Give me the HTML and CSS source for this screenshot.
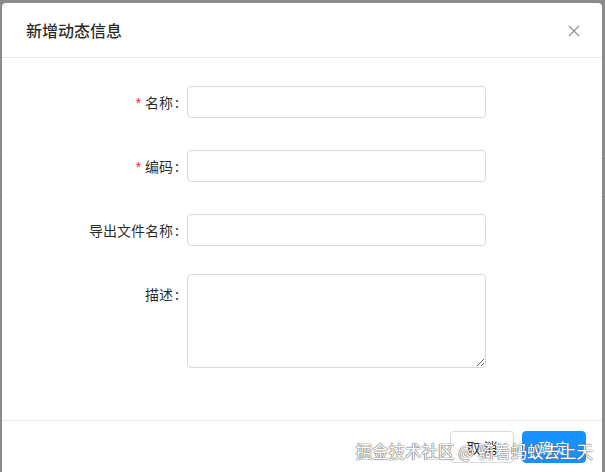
FILE: index.html
```html
<!DOCTYPE html>
<html lang="zh-CN">

<head>
    <meta charset="UTF-8">
    <title>新增动态信息</title>
    <link rel="stylesheet" href="styles.css">
</head>

<body>
    <div class="modal">
        <div class="modal-header">
            <div class="modal-title">新增动态信息</div>
            <button class="modal-close" type="button" aria-label="Close">
                <svg viewBox="0 0 12 12" width="12" height="12">
                    <path d="M1 1 L11 11 M11 1 L1 11" stroke="currentColor" stroke-width="1.1" fill="none"/>
                </svg>
            </button>
        </div>

        <div class="modal-body">
            <form class="form" action="#">
                <div class="form-item">
                    <label class="form-label required">名称</label>
                    <div class="form-control"><input type="text" class="input"></div>
                </div>
                <div class="form-item">
                    <label class="form-label required">编码</label>
                    <div class="form-control"><input type="text" class="input"></div>
                </div>
                <div class="form-item">
                    <label class="form-label">导出文件名称</label>
                    <div class="form-control"><input type="text" class="input"></div>
                </div>
                <div class="form-item">
                    <label class="form-label">描述</label>
                    <div class="form-control"><textarea class="input textarea"></textarea></div>
                </div>
            </form>
        </div>

        <div class="modal-footer">
            <button type="button" class="btn">取 消</button>
            <button type="button" class="btn btn-primary">确 定</button>
        </div>
    </div>

    <div class="watermark">掘金技术社区 @ 骑着蚂蚁去上天</div>
</body>

</html>
```

FILE: styles.css
```css
:root {
    --primary-color: #1890ff;
    --text-color: rgba(0, 0, 0, 0.85);
    --light-text: rgba(0, 0, 0, 0.45);
    --border-color: #d9d9d9;
    --split-color: #e8e8e8;
    --required-color: #f5222d;
}

* {
    margin: 0;
    padding: 0;
    box-sizing: border-box;
}

body {
    height: 472px;
    overflow: hidden;
    padding: 3px 3px 0 2px;
    font-family: "Noto Sans CJK SC", "Noto Sans", sans-serif;
    font-size: 14px;
    color: var(--text-color);
    background: #8c8c8c;
    background-image:
        linear-gradient(#7b7b7b, #7b7b7b),
        linear-gradient(#7b7b7b, #7b7b7b);
    background-size: 100% 1px, 100% 1px;
    background-position: 0 158px, 0 196px;
    background-repeat: no-repeat;
    position: relative;
}

.modal {
    position: relative;
    width: 600px;
    background: #fff;
    border-radius: 4px 4px 0 0;
}

.modal-header {
    height: 55px;
    padding: 16px 24px;
    border-bottom: 1px solid var(--split-color);
}

.modal-title {
    font-size: 16px;
    font-weight: 500;
    line-height: 22px;
    color: var(--text-color);
}

.modal-close {
    position: absolute;
    top: 0;
    right: 0;
    width: 56px;
    height: 56px;
    border: none;
    background: transparent;
    color: var(--light-text);
    display: flex;
    align-items: center;
    justify-content: center;
    cursor: pointer;
}

.modal-body {
    padding: 24px;
}

.form-item {
    display: flex;
    margin-bottom: 24px;
}

.form-item:last-child {
    margin-bottom: 28px;
}

.form-label {
    width: 161px;
    height: 40px;
    flex: none;
    line-height: 40px;
    text-align: right;
    white-space: nowrap;
    color: var(--text-color);
}

.form-label.required::before {
    content: "*";
    margin-right: 4px;
    font-family: "Liberation Sans", sans-serif;
    font-size: 14px;
    line-height: 1;
    color: var(--required-color);
}

.form-label::after {
    content: ":";
    margin: 0 8px 0 2px;
}

.form-control {
    width: 299px;
    height: 40px;
    display: flex;
    align-items: center;
}

.form-control:has(.textarea) {
    height: auto;
    align-items: flex-start;
}

.input {
    width: 100%;
    height: 32px;
    padding: 4px 11px;
    font-family: inherit;
    font-size: 14px;
    color: var(--text-color);
    border: 1px solid var(--border-color);
    border-radius: 4px;
    background: #fff;
    outline: none;
}

.textarea {
    height: 94px;
    line-height: 1.5;
}

.modal-footer {
    display: flex;
    justify-content: flex-end;
    gap: 8px;
    padding: 10px 16px;
    border-top: 1px solid var(--split-color);
}

.btn {
    min-width: 64px;
    height: 32px;
    padding: 0 15px;
    font-family: inherit;
    font-size: 14px;
    color: var(--text-color);
    background: #fff;
    border: 1px solid var(--border-color);
    border-radius: 4px;
    cursor: pointer;
}

.btn-primary {
    color: #fff;
    background: var(--primary-color);
    border-color: var(--primary-color);
}

.watermark {
    position: absolute;
    right: 12px;
    bottom: 9px;
    font-size: 16.5px;
    line-height: 24px;
    color: #fff;
    text-shadow: 0 0 1px #666, 0 0 1px #666, 0 0 1px #666;
    white-space: nowrap;
    pointer-events: none;
}
```
